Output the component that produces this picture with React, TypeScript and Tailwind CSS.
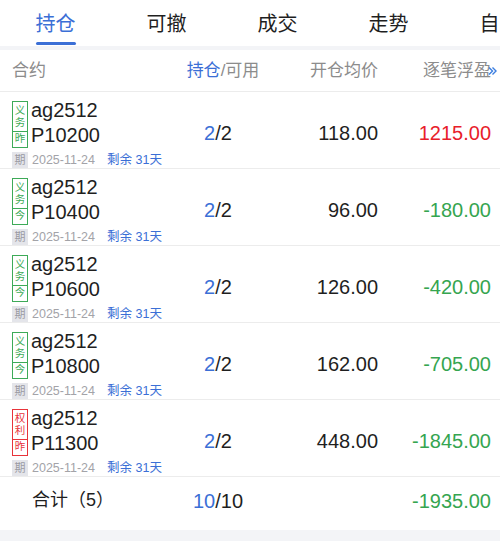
import React from 'react';

type Row = {
  kind: 'duty' | 'right';
  day: string;
  strike: string;
  price: string;
  pnl: string;
};

const rows: Row[] = [
  { kind: 'duty', day: '昨', strike: 'P10200', price: '118.00', pnl: '1215.00' },
  { kind: 'duty', day: '今', strike: 'P10400', price: '96.00', pnl: '-180.00' },
  { kind: 'duty', day: '今', strike: 'P10600', price: '126.00', pnl: '-420.00' },
  { kind: 'duty', day: '今', strike: 'P10800', price: '162.00', pnl: '-705.00' },
  { kind: 'right', day: '昨', strike: 'P11300', price: '448.00', pnl: '-1845.00' },
];

const tabs = ['持仓', '可撤', '成交', '走势', '自选'];

function Badge({ kind, day }: { kind: Row['kind']; day: string }) {
  const color =
    kind === 'duty' ? 'border-[#3daa58] text-[#3daa58]' : 'border-[#e8333a] text-[#e8333a]';
  const label = kind === 'duty' ? ['义', '务'] : ['权', '利'];
  return (
    <div className={`mt-[3px] flex w-4 shrink-0 flex-col border ${color} text-[10.5px] leading-[11px]`}>
      <div className="flex h-[29px] flex-col items-center justify-center gap-[1px]">
        <span>{label[0]}</span>
        <span>{label[1]}</span>
      </div>
      <div className={`flex h-[13px] items-center justify-center border-t ${color}`}>{day}</div>
    </div>
  );
}

export default function App() {
  return (
    <div
      className="h-[541px] w-[500px] overflow-hidden bg-[#f3f4f7] text-[#1f1f1f]"
      style={{ fontFamily: '"Liberation Sans", "Noto Sans CJK SC", sans-serif' }}
    >
      {/* tabs */}
      <div className="flex h-[46px] overflow-hidden bg-white">
        {tabs.map((t, i) => (
          <div key={t} className="relative flex w-[111px] shrink-0 items-center justify-center pt-[2px]">
            <span className={`whitespace-nowrap text-[20px] ${i === 0 ? 'text-[#3b6fd6]' : 'text-[#1f1f1f]'}`}>{t}</span>
            {i === 0 && (
              <div className="absolute bottom-[1px] left-[36px] h-[3px] w-[40px] rounded-full bg-[#3b6fd6]" />
            )}
          </div>
        ))}
      </div>

      <div className="mt-[4px] bg-white">
        {/* header */}
        <div className="grid h-[42px] grid-cols-[158px_96px_112px_113px] items-center border-b border-[#ececec] pl-3 pr-[9px] text-[17px] text-[#8c8c8c]">
          <div>合约</div>
          <div className="pl-[10px] text-center">
            <span className="text-[#3b6fd6]">持仓</span>/可用
          </div>
          <div className="text-right">开仓均价</div>
          <div className="flex items-center justify-end">
            <span>逐笔浮盈</span>
            <svg width="9" height="10" viewBox="0 0 9 10" className="-ml-[3px] mr-[-6px]">
              <path d="M1 1.5 4.5 5 1 8.5M4.5 1.5 8 5 4.5 8.5" fill="none" stroke="#3b7ee0" strokeWidth="1.4" />
            </svg>
          </div>
        </div>

        {rows.map((r) => (
          <div
            key={r.strike}
            className="grid h-[77px] grid-cols-[158px_96px_112px_113px] border-b border-[#ececec] pl-3 pr-[9px]"
          >
            <div className="flex flex-col pt-[6px]">
              <div className="flex gap-[3px]">
                <Badge kind={r.kind} day={r.day} />
                <div className="text-[20px] leading-[25px]">
                  <div>ag2512</div>
                  <div>{r.strike}</div>
                </div>
              </div>
              <div className="mt-[4px] flex h-4 items-center text-[12.5px]">
                <span className="flex h-4 w-4 items-center justify-center bg-[#e4e5ea] text-[11px] text-[#9a9aa2]">期</span>
                <span className="ml-[4px] text-[#a3a3a8]">2025-11-24</span>
                <span className="ml-[12px] text-[#3b6fd6]">剩余 31天</span>
              </div>
            </div>
            <div className="self-center pt-[6px] text-center text-[20px]">
              <span className="text-[#3b6fd6]">2</span>/2
            </div>
            <div className="self-center pt-[6px] text-right text-[20px]">{r.price}</div>
            <div
              className={`self-center pt-[6px] text-right text-[20px] ${
                r.pnl.startsWith('-') ? 'text-[#35a550]' : 'text-[#e8202a]'
              }`}
            >
              {r.pnl}
            </div>
          </div>
        ))}

        {/* total */}
        <div className="grid h-[53px] grid-cols-[158px_96px_112px_113px] items-center pb-[6px] pl-3 pr-[9px] text-[20px]">
          <div className="pl-[20px] text-[18px]">合计（5）</div>
          <div className="text-center">
            <span className="text-[#3b6fd6]">10</span>/10
          </div>
          <div />
          <div className="text-right text-[#35a550]">-1935.00</div>
        </div>
      </div>
    </div>
  );
}
